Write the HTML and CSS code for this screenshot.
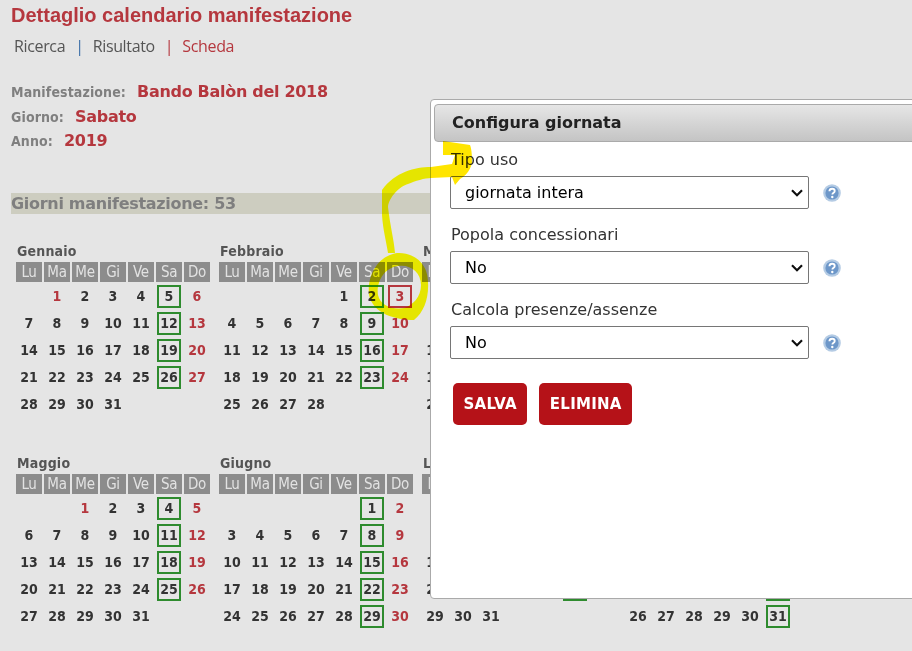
FILE: index.html
```html
<!DOCTYPE html>
<html lang="it">
<head>
<meta charset="utf-8">
<title>Dettaglio calendario manifestazione</title>
<link rel="stylesheet" href="styles.css">
</head>
<body>
<main class="page">
  <h1 class="title">Dettaglio calendario manifestazione</h1>
  <nav class="crumbs">
    <a>Ricerca</a><i>|</i><a>Risultato</a><i class="red">|</i><a class="red">Scheda</a>
  </nav>
  <dl class="info">
    <div><dt>Manifestazione:</dt><dd>Bando Balòn del 2018</dd></div>
    <div><dt>Giorno:</dt><dd>Sabato</dd></div>
    <div><dt>Anno:</dt><dd>2019</dd></div>
  </dl>
  <h2 class="band">Giorni manifestazione: 53</h2>
  <section class="year">
    <article class="month"><h3>Gennaio</h3><div class="grid">
      <b>Lu</b><b>Ma</b><b>Me</b><b>Gi</b><b>Ve</b><b>Sa</b><b>Do</b>
      <span></span><span class="r">1</span><span>2</span><span>3</span><span>4</span><span class="s">5</span><span class="r">6</span>
      <span>7</span><span>8</span><span>9</span><span>10</span><span>11</span><span class="s">12</span><span class="r">13</span>
      <span>14</span><span>15</span><span>16</span><span>17</span><span>18</span><span class="s">19</span><span class="r">20</span>
      <span>21</span><span>22</span><span>23</span><span>24</span><span>25</span><span class="s">26</span><span class="r">27</span>
      <span>28</span><span>29</span><span>30</span><span>31</span>
    </div></article>
    <article class="month"><h3>Febbraio</h3><div class="grid">
      <b>Lu</b><b>Ma</b><b>Me</b><b>Gi</b><b>Ve</b><b>Sa</b><b>Do</b>
      <span></span><span></span><span></span><span></span><span>1</span><span class="s">2</span><span class="r x">3</span>
      <span>4</span><span>5</span><span>6</span><span>7</span><span>8</span><span class="s">9</span><span class="r">10</span>
      <span>11</span><span>12</span><span>13</span><span>14</span><span>15</span><span class="s">16</span><span class="r">17</span>
      <span>18</span><span>19</span><span>20</span><span>21</span><span>22</span><span class="s">23</span><span class="r">24</span>
      <span>25</span><span>26</span><span>27</span><span>28</span>
    </div></article>
    <article class="month"><h3>Marzo</h3><div class="grid">
      <b>Lu</b><b>Ma</b><b>Me</b><b>Gi</b><b>Ve</b><b>Sa</b><b>Do</b>
      <span></span><span></span><span></span><span></span><span>1</span><span class="s">2</span><span class="r">3</span>
      <span>4</span><span>5</span><span>6</span><span>7</span><span>8</span><span class="s">9</span><span class="r">10</span>
      <span>11</span><span>12</span><span>13</span><span>14</span><span>15</span><span class="s">16</span><span class="r">17</span>
      <span>18</span><span>19</span><span>20</span><span>21</span><span>22</span><span class="s">23</span><span class="r">24</span>
      <span>25</span><span>26</span><span>27</span><span>28</span><span>29</span><span class="s">30</span><span class="r">31</span>
    </div></article>
    <article class="month"><h3>Aprile</h3><div class="grid">
      <b>Lu</b><b>Ma</b><b>Me</b><b>Gi</b><b>Ve</b><b>Sa</b><b>Do</b>
      <span>1</span><span>2</span><span>3</span><span>4</span><span>5</span><span class="s">6</span><span class="r">7</span>
      <span>8</span><span>9</span><span>10</span><span>11</span><span>12</span><span class="s">13</span><span class="r">14</span>
      <span>15</span><span>16</span><span>17</span><span>18</span><span>19</span><span class="s">20</span><span class="r">21</span>
      <span>22</span><span>23</span><span>24</span><span>25</span><span>26</span><span class="s">27</span><span class="r">28</span>
      <span>29</span><span>30</span>
    </div></article>
    <article class="month"><h3>Maggio</h3><div class="grid">
      <b>Lu</b><b>Ma</b><b>Me</b><b>Gi</b><b>Ve</b><b>Sa</b><b>Do</b>
      <span></span><span></span><span class="r">1</span><span>2</span><span>3</span><span class="s">4</span><span class="r">5</span>
      <span>6</span><span>7</span><span>8</span><span>9</span><span>10</span><span class="s">11</span><span class="r">12</span>
      <span>13</span><span>14</span><span>15</span><span>16</span><span>17</span><span class="s">18</span><span class="r">19</span>
      <span>20</span><span>21</span><span>22</span><span>23</span><span>24</span><span class="s">25</span><span class="r">26</span>
      <span>27</span><span>28</span><span>29</span><span>30</span><span>31</span>
    </div></article>
    <article class="month"><h3>Giugno</h3><div class="grid">
      <b>Lu</b><b>Ma</b><b>Me</b><b>Gi</b><b>Ve</b><b>Sa</b><b>Do</b>
      <span></span><span></span><span></span><span></span><span></span><span class="s">1</span><span class="r">2</span>
      <span>3</span><span>4</span><span>5</span><span>6</span><span>7</span><span class="s">8</span><span class="r">9</span>
      <span>10</span><span>11</span><span>12</span><span>13</span><span>14</span><span class="s">15</span><span class="r">16</span>
      <span>17</span><span>18</span><span>19</span><span>20</span><span>21</span><span class="s">22</span><span class="r">23</span>
      <span>24</span><span>25</span><span>26</span><span>27</span><span>28</span><span class="s">29</span><span class="r">30</span>
    </div></article>
    <article class="month"><h3>Luglio</h3><div class="grid">
      <b>Lu</b><b>Ma</b><b>Me</b><b>Gi</b><b>Ve</b><b>Sa</b><b>Do</b>
      <span>1</span><span>2</span><span>3</span><span>4</span><span>5</span><span class="s">6</span><span class="r">7</span>
      <span>8</span><span>9</span><span>10</span><span>11</span><span>12</span><span class="s">13</span><span class="r">14</span>
      <span>15</span><span>16</span><span>17</span><span>18</span><span>19</span><span class="s">20</span><span class="r">21</span>
      <span>22</span><span>23</span><span>24</span><span>25</span><span>26</span><span class="s">27</span><span class="r">28</span>
      <span>29</span><span>30</span><span>31</span>
    </div></article>
    <article class="month"><h3>Agosto</h3><div class="grid">
      <b>Lu</b><b>Ma</b><b>Me</b><b>Gi</b><b>Ve</b><b>Sa</b><b>Do</b>
      <span></span><span></span><span></span><span>1</span><span>2</span><span class="s">3</span><span class="r">4</span>
      <span>5</span><span>6</span><span>7</span><span>8</span><span>9</span><span class="s">10</span><span class="r">11</span>
      <span>12</span><span>13</span><span>14</span><span>15</span><span>16</span><span class="s">17</span><span class="r">18</span>
      <span>19</span><span>20</span><span>21</span><span>22</span><span>23</span><span class="s">24</span><span class="r">25</span>
      <span>26</span><span>27</span><span>28</span><span>29</span><span>30</span><span class="s">31</span>
    </div></article>
  </section>
</main>

<aside class="dialog">
  <header class="dialog-head">Configura giornata</header>
  <form class="form">
    <label class="field-label" for="f1">Tipo uso</label>
    <div class="field">
      <select id="f1" class="select"><option>giornata intera</option></select>
      <svg class="help" viewBox="0 0 18 18" aria-hidden="true"><circle cx="9" cy="9" r="8.8" fill="#b4cbe4"/><circle cx="9" cy="9" r="6.6" fill="#6d97c9"/><path d="M6.4 7.2C6.5 5.5 7.7 4.7 9.1 4.7c1.6 0 2.6.9 2.6 2.2 0 1.1-.7 1.6-1.4 2.1-.7.5-.9.8-.9 1.5" fill="none" stroke="#fff" stroke-width="1.9"/><circle cx="9.3" cy="13" r="1.2" fill="#fff"/></svg>
    </div>
    <label class="field-label" for="f2">Popola concessionari</label>
    <div class="field">
      <select id="f2" class="select"><option>No</option></select>
      <svg class="help" viewBox="0 0 18 18" aria-hidden="true"><circle cx="9" cy="9" r="8.8" fill="#b4cbe4"/><circle cx="9" cy="9" r="6.6" fill="#6d97c9"/><path d="M6.4 7.2C6.5 5.5 7.7 4.7 9.1 4.7c1.6 0 2.6.9 2.6 2.2 0 1.1-.7 1.6-1.4 2.1-.7.5-.9.8-.9 1.5" fill="none" stroke="#fff" stroke-width="1.9"/><circle cx="9.3" cy="13" r="1.2" fill="#fff"/></svg>
    </div>
    <label class="field-label" for="f3">Calcola presenze/assenze</label>
    <div class="field">
      <select id="f3" class="select"><option>No</option></select>
      <svg class="help" viewBox="0 0 18 18" aria-hidden="true"><circle cx="9" cy="9" r="8.8" fill="#b4cbe4"/><circle cx="9" cy="9" r="6.6" fill="#6d97c9"/><path d="M6.4 7.2C6.5 5.5 7.7 4.7 9.1 4.7c1.6 0 2.6.9 2.6 2.2 0 1.1-.7 1.6-1.4 2.1-.7.5-.9.8-.9 1.5" fill="none" stroke="#fff" stroke-width="1.9"/><circle cx="9.3" cy="13" r="1.2" fill="#fff"/></svg>
    </div>
    <div class="actions">
      <button type="button" class="btn">SALVA</button>
      <button type="button" class="btn">ELIMINA</button>
    </div>
  </form>
</aside>

<svg class="scribble" viewBox="0 0 912 651" aria-hidden="true">
  <path d="M431 167 C415 167 395 172 382 190 L382 215 C383 230 386 240 388 253 L395 253 C394 240 390 225 388 207 C389 197 400 186 408 184 C415 181 425 178 431 178 Z"/>
  <path class="on-dialog" d="M431 167 L452 164 L455 155 L443 155 L443 141 L470 145 C472 150 472 158 472 163 C470 170 467 174 463 177 L460 179 L455 185 L452 177 L431 178 Z"/>
  <path fill-rule="evenodd" d="M397 253 C412 252 428 262 428 282 C429 298 424 312 414 320 C396 320 373 314 369 295 C367 275 378 256 397 253 Z M398 266 C410 264 421 272 421 285 C421 297 413 305 404 308 C392 310 380 305 378 295 C376 282 384 268 398 266 Z"/>
</svg>
</body>
</html>
```

FILE: styles.css
```css
* { box-sizing: border-box; }
html, body { margin: 0; height: 651px; overflow: hidden; }
body { background: #e5e5e5; position: relative; font-family: "DejaVu Sans", Verdana, sans-serif; color: #333; }

.page { padding: 5px 0 0 11px; }

.title { margin: 0; font: bold 20px/20px "Liberation Sans", Arial, sans-serif; color: #b5373e; }

.crumbs { display: flex; align-items: center; margin: 11px 0 0 3px; font: 16px/20px "Open Sans", sans-serif; letter-spacing: -.35px; color: #555; }
.crumbs i { font-style: normal; color: #3d6fa8; margin: 0 9px 0 10px; }
.crumbs .red { color: #b5373e; }

.info { margin: 24px 0 0; }
.info div { display: flex; align-items: baseline; height: 24.5px; }
.info dt { font: bold 14px/24px "DejaVu Sans Condensed", "DejaVu Sans", sans-serif; letter-spacing: .12px; color: #7f7f7f; margin-right: 11px; }
.info dd { margin: 0; font: bold 16px/24px "DejaVu Sans", sans-serif; letter-spacing: -.3px; color: #b5373e; }

.band { margin: 39.5px 0 0; height: 21px; width: 500px; background: #cdcdc0; font: bold 16px/21px "DejaVu Sans", sans-serif; letter-spacing: -.3px; color: #7f7f7f; }

.year { display: grid; grid-template-columns: repeat(4, 194px); column-gap: 9px; row-gap: 35px; margin: 29px 0 0 5px; }
.month { height: 177px; }
.month h3 { margin: 0; height: 19px; padding-left: 1px; font: bold 14px/17px "DejaVu Sans Condensed", "DejaVu Sans", sans-serif; letter-spacing: .2px; color: #555; }

.grid { display: grid; grid-template-columns: repeat(7, 26px); column-gap: 2px; grid-template-rows: 19px; grid-auto-rows: 23px; row-gap: 4px; }
.grid b { height: 20px; background: #8c8c8c; color: #e2e2e2; text-align: center; font: 15px/20px "DejaVu Sans Condensed", "DejaVu Sans", sans-serif; letter-spacing: -.3px; }
.grid span { width: 24px; height: 23px; margin: 0 1px; text-align: center; font: bold 14px/23px "DejaVu Sans Condensed", "DejaVu Sans", sans-serif; color: #333; white-space: nowrap; }
.grid .r { color: #b5373e; }
.grid .s { border: 2px solid #2e8b2e; line-height: 19px; }
.grid .x { border: 2px solid #b5373e; line-height: 19px; }

.dialog { position: absolute; left: 430px; top: 99px; width: 520px; height: 500px; background: #fff; border: 1px solid #aaa; border-radius: 4px; padding: 4px 0 0 3px; }
.dialog-head { height: 38px; border: 1px solid #aaa; border-radius: 4px; background: linear-gradient(#e6e6e6, #c4c4c4); padding-left: 17px; font: bold 16px/36px "DejaVu Sans", sans-serif; color: #222; }

.form { padding: 8px 0 0 16px; }
.field-label { display: block; height: 26px; padding-left: 1px; font: 16px/20px "DejaVu Sans", sans-serif; color: #333; }
.field { display: flex; align-items: center; gap: 14px; height: 33px; margin-bottom: 16px; }
.select { appearance: none; width: 359px; height: 33px; padding-left: 14px; background: #fff url("data:image/svg+xml,%3Csvg xmlns='http://www.w3.org/2000/svg' width='12' height='8'%3E%3Cpath d='M1 1.2l5 5 5-5' fill='none' stroke='%23111' stroke-width='2.2'/%3E%3C/svg%3E") no-repeat right 5px center; border: 1px solid #767676; border-radius: 2px; font: 16px "DejaVu Sans", sans-serif; color: #000; }
.help { width: 18px; height: 18px; flex: none; }

.actions { display: flex; gap: 12px; margin: 24px 0 0 3px; }
.btn { height: 42px; padding: 0 10.5px; background: #b51218; border: 0; border-radius: 5px; color: #fff; font: bold 15px "DejaVu Sans", sans-serif; letter-spacing: .25px; }

.scribble { position: absolute; left: 0; top: 0; width: 912px; height: 651px; mix-blend-mode: multiply; pointer-events: none; fill: #ffff00; }
.scribble .on-dialog { fill: #ffe500; }
```
